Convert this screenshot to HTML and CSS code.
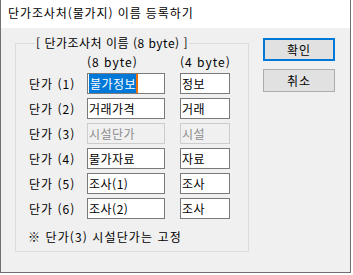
FILE: index.html
```html
<!DOCTYPE html>
<html lang="ko">
<head>
    <meta charset="UTF-8">
    <title>단가조사처(물가지) 이름 등록하기</title>
    <link rel="stylesheet" href="styles.css">
</head>
<body>
    <div class="window">
        <div class="titlebar">단가조사처(물가지) 이름 등록하기</div>
        <div class="client">
            <fieldset class="group">
                <legend>[ 단가조사처 이름 (8 byte) ]</legend>
                <div class="grid">
                    <span></span>
                    <span class="head">(8 byte)</span>
                    <span class="head">(4 byte)</span>

                    <span class="label">단가 (1)</span>
                    <div class="field long"><span class="sel">불가정보</span></div>
                    <div class="field short">정보</div>

                    <span class="label">단가 (2)</span>
                    <div class="field long">거래가격</div>
                    <div class="field short">거래</div>

                    <span class="label">단가 (3)</span>
                    <div class="field long disabled">시설단가</div>
                    <div class="field short disabled">시설</div>

                    <span class="label">단가 (4)</span>
                    <div class="field long">물가자료</div>
                    <div class="field short">자료</div>

                    <span class="label">단가 (5)</span>
                    <div class="field long">조사(1)</div>
                    <div class="field short">조사</div>

                    <span class="label">단가 (6)</span>
                    <div class="field long">조사(2)</div>
                    <div class="field short">조사</div>
                </div>
                <p class="note">※ 단가(3) 시설단가는 고정</p>
            </fieldset>

            <div class="buttons">
                <button class="btn default">확인</button>
                <button class="btn">취소</button>
            </div>
        </div>
    </div>
</body>
</html>
```
FILE: styles.css
```css
body {
    margin: 0;
    background-color: #fff;
    font-family: 'Noto Sans CJK KR', 'Noto Sans', sans-serif;
    font-size: 12px;
    letter-spacing: 1px;
    color: #000;
}

.window {
    width: 349px;
    height: 272px;
    border: 1px solid #707070;
    border-top: none;
    background-color: #f0f0f0;
    display: flex;
    flex-direction: column;
}

.titlebar {
    height: 28px;
    line-height: 26px;
    padding-left: 7px;
    background-color: #fff;
    letter-spacing: 0.9px;
}

.client {
    display: flex;
    align-items: flex-start;
    padding: 8px 0 0 14px;
}

.group {
    margin: 0;
    width: 234px;
    height: 216px;
    box-sizing: border-box;
    padding: 5px 0 0 13px;
    border: 1px solid #dcdcdc;
}

.group legend {
    margin-left: 6px;
    padding: 0 1px;
    line-height: 14px;
    letter-spacing: 0.5px;
}

.grid {
    display: grid;
    grid-template-columns: 58px 93px 50px;
    grid-template-rows: 14px;
    grid-auto-rows: 21px;
    row-gap: 4px;
    align-items: center;
}

.head,
.label {
    line-height: 14px;
    white-space: nowrap;
}

.field {
    height: 21px;
    box-sizing: border-box;
    border: 1px solid #7a7a7a;
    background-color: #fff;
    padding: 0 1px;
    line-height: 19px;
    white-space: nowrap;
    overflow: hidden;
    letter-spacing: 0.5px;
}

.field.long {
    width: 78px;
}

.field.short {
    width: 50px;
}

.field.disabled {
    border-color: #cccccc;
    background-color: #f0f0f0;
    color: #8c8c8c;
}

.sel {
    background-color: #0078d7;
    color: #fff;
    border-right: 2px solid #e8700c;
    padding: 1px 0 1px 1px;
}

.note {
    margin: 11px 0 0 -1px;
    line-height: 14px;
    letter-spacing: 1.1px;
}

.buttons {
    display: flex;
    flex-direction: column;
    gap: 8px;
    margin: 2px 0 0 14px;
}

.btn {
    width: 72px;
    height: 23px;
    padding: 0;
    background-color: #e1e1e1;
    border: 1px solid #adadad;
    font-family: inherit;
    font-size: 12px;
    letter-spacing: 1px;
    color: #000;
}

.btn.default {
    border: 2px solid #0078d7;
}
```
